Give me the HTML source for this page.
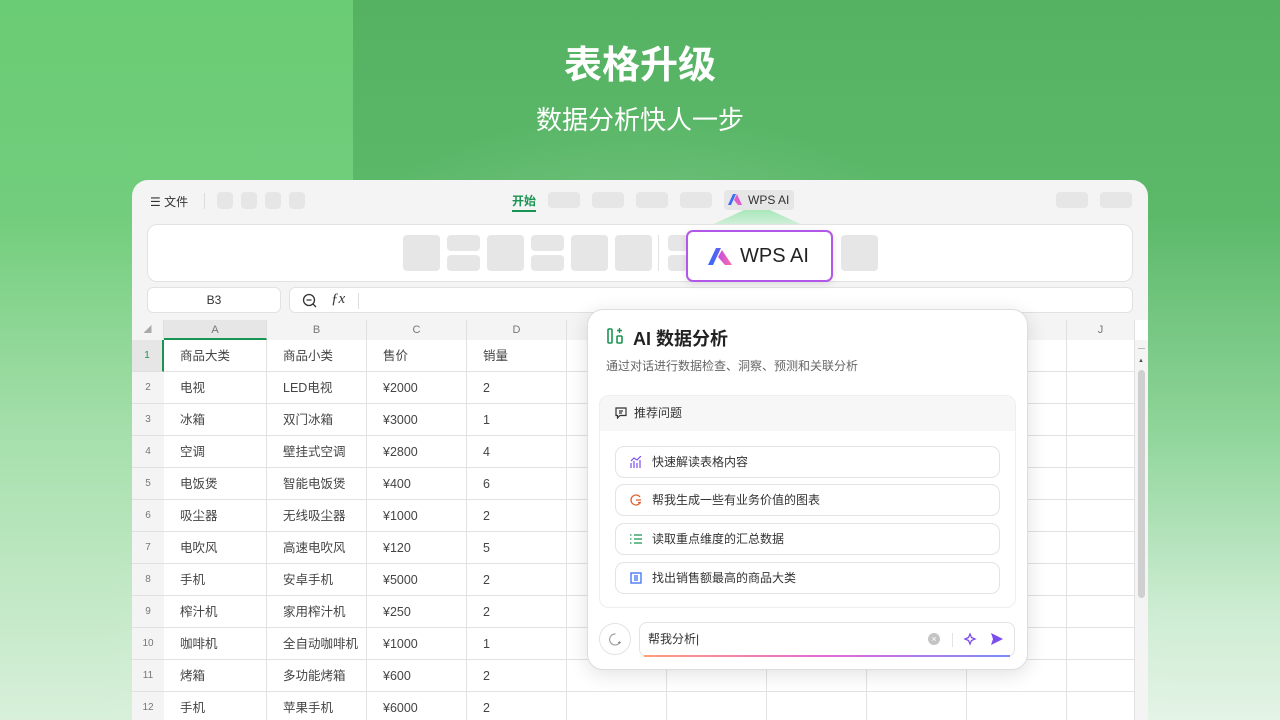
<!DOCTYPE html>
<html style="width:1280px;height:720px;overflow:hidden"><head><meta charset="utf-8"><style>
*{margin:0;padding:0;box-sizing:border-box}
body{width:1280px;height:720px;overflow:hidden;font-family:"Liberation Sans","Noto Sans CJK SC",sans-serif;position:relative;
background:linear-gradient(180deg,#55b262 0%,#5cb96a 30%,#8fd59a 60%,#cdecd2 85%,#e4f4e6 100%);}
.lp{position:absolute;left:0;top:0;width:353px;height:720px;background:linear-gradient(180deg,#6acc74 0%,#72cd7c 30%,#a5dfab 60%,#d8f0da 100%);}
.bgfade{position:absolute;left:0;top:0;width:1280px;height:720px;background:radial-gradient(ellipse at 50% 100%,rgba(230,246,232,.7),rgba(230,246,232,0) 60%);}
h1{position:absolute;top:34px;width:1280px;text-align:center;color:#fff;font-size:38px;font-weight:bold;letter-spacing:0}
h2{position:absolute;top:100px;width:1280px;text-align:center;color:#fff;font-size:26px;font-weight:normal;letter-spacing:0}
.win{position:absolute;left:132px;top:180px;width:1016px;height:540px;background:#f4f4f4;border-radius:16px 16px 0 0;overflow:hidden}
.g{position:absolute;background:#e6e6e6;border-radius:4px}
.ribbon{position:absolute;left:15px;top:44px;width:986px;height:58px;background:#fff;border:1px solid #e2e2e2;border-radius:10px}
.box{position:absolute;background:#fff;border:1px solid #e2e2e2;border-radius:6px;height:26px}
.sheet{position:absolute;left:0;top:140px;width:1016px;height:400px;background:#fff}
.colh{position:absolute;top:0;height:20px;background:#f4f4f4;font-size:11px;color:#777;text-align:center;line-height:20px;border-right:1px solid #e0e0e0}
.rowh{position:absolute;left:0;width:32px;height:32px;background:#f4f4f4;font-size:10px;color:#777;text-align:center;line-height:32px;border-bottom:1px solid #e0e0e0}
.cell{position:absolute;height:32px;font-size:12.5px;color:#444;line-height:32px;padding-left:16px;border-right:1px solid #e2e2e2;border-bottom:1px solid #e2e2e2}
.panel{position:absolute;left:587px;top:309px;width:441px;height:361px;background:#fff;border:1px solid #ddd;border-radius:16px;box-shadow:0 4px 20px rgba(0,0,0,.12)}
.q{position:absolute;left:27px;width:385px;height:32px;border:1px solid #e3e3e3;border-radius:9px;font-size:12px;color:#333;line-height:30px;padding-left:36px}
.q svg{position:absolute;left:14px;top:9px}
</style></head><body>
<div class="lp"></div><div class="bgfade"></div>
<h1>表格升级</h1>
<h2>数据分析快人一步</h2>
<div class="win">
 <div style="position:absolute;left:18px;top:13px;font-size:12px;color:#333">☰ 文件</div>
 <div style="position:absolute;left:72px;top:13px;width:1px;height:16px;background:#ddd"></div>
 <div class="g" style="left:85px;top:12px;width:16px;height:17px"></div>
 <div class="g" style="left:109px;top:12px;width:16px;height:17px"></div>
 <div class="g" style="left:133px;top:12px;width:16px;height:17px"></div>
 <div class="g" style="left:157px;top:12px;width:16px;height:17px"></div>
 <div style="position:absolute;left:380px;top:12px;font-size:12px;color:#1a9452;font-weight:bold">开始</div>
 <div style="position:absolute;left:380px;top:30px;width:24px;height:2px;background:#1a9452"></div>
 <div class="g" style="left:416px;top:12px;width:32px;height:16px"></div>
 <div class="g" style="left:460px;top:12px;width:32px;height:16px"></div>
 <div class="g" style="left:504px;top:12px;width:32px;height:16px"></div>
 <div class="g" style="left:548px;top:12px;width:32px;height:16px"></div>
 <div class="g" style="left:592px;top:10px;width:70px;height:20px"></div>
 <svg style="position:absolute;left:596px;top:14px" width="14" height="11" viewBox="0 0 14 11"><path d="M0 11 L5 0 H8 L3 11Z" fill="#3b6ef5"/><path d="M6 6 L9 0 L14 11 H10Z" fill="#e05ec9"/></svg>
 <div style="position:absolute;left:616px;top:13px;font-size:12px;color:#333">WPS AI</div>
 <div style="position:absolute;left:560px;top:30px;width:130px;height:24px;background:linear-gradient(180deg,rgba(160,230,180,.9),rgba(200,240,210,.2));clip-path:polygon(40% 0,60% 0,100% 100%,0 100%)"></div>
 <div class="g" style="left:924px;top:12px;width:32px;height:16px"></div>
 <div class="g" style="left:968px;top:12px;width:32px;height:16px"></div>
 <div class="ribbon">
  <div class="g" style="left:255px;top:10px;width:37px;height:36px"></div>
  <div class="g" style="left:299px;top:10px;width:33px;height:16px"></div>
  <div class="g" style="left:299px;top:30px;width:33px;height:16px"></div>
  <div class="g" style="left:339px;top:10px;width:37px;height:36px"></div>
  <div class="g" style="left:383px;top:10px;width:33px;height:16px"></div>
  <div class="g" style="left:383px;top:30px;width:33px;height:16px"></div>
  <div class="g" style="left:423px;top:10px;width:37px;height:36px"></div>
  <div class="g" style="left:467px;top:10px;width:37px;height:36px"></div>
  <div style="position:absolute;left:510px;top:10px;width:1px;height:36px;background:#e2e2e2"></div>
  <div class="g" style="left:520px;top:10px;width:20px;height:16px"></div>
  <div class="g" style="left:520px;top:30px;width:20px;height:16px"></div>
  <div class="g" style="left:693px;top:10px;width:37px;height:36px"></div>
 </div>
 <div class="box" style="left:15px;top:107px;width:134px;font-size:12px;color:#333;text-align:center;line-height:24px">B3</div>
 <div class="box" style="left:157px;top:107px;width:844px">
  <svg style="position:absolute;left:12px;top:5px" width="16" height="16" viewBox="0 0 16 16" fill="none" stroke="#333" stroke-width="1.3"><circle cx="7" cy="7" r="5.5"/><path d="M4.5 7H9.5M11 11L14 14"/></svg>
  <div style="position:absolute;left:41px;top:3px;font-size:15px;font-style:italic;font-family:'Liberation Serif',serif;color:#333">ƒx</div>
  <div style="position:absolute;left:68px;top:5px;width:1px;height:16px;background:#ddd"></div>
 </div>
 <div class="sheet" id="sh"></div>
</div>
<div style="position:absolute;left:686px;top:230px;width:147px;height:52px;background:#fff;border:2px solid #b158e8;border-radius:7px;box-shadow:0 2px 8px rgba(0,0,0,.1)">
 <svg style="position:absolute;left:20px;top:16px" width="24" height="17" viewBox="0 0 24 17"><defs><linearGradient id="a" x1="0" x2="1"><stop offset="0" stop-color="#2f6cf6"/><stop offset="1" stop-color="#6b5cf0"/></linearGradient><linearGradient id="b" x1="0" x2="1"><stop offset="0" stop-color="#c04ee8"/><stop offset="1" stop-color="#ff6fa0"/></linearGradient></defs><path d="M0 17 L8 0 H13 L5 17Z" fill="url(#a)"/><path d="M10 9 L14 2 L24 17 H17Z" fill="url(#b)"/></svg>
 <div style="position:absolute;left:52px;top:13px;font-size:20px;color:#222">WPS AI</div>
</div>
<div class="panel">
 <svg style="position:absolute;left:19px;top:17px" width="18" height="18" viewBox="0 0 18 18" fill="none" stroke="#1a9452" stroke-width="1.6"><rect x="1" y="2" width="4" height="14" rx="1"/><rect x="10" y="9" width="5" height="7" rx="1"/><path d="M12.5 1V6M10 3.5H15" stroke-width="1.4"/></svg>
 <div style="position:absolute;left:45px;top:15px;font-size:18px;color:#222;font-weight:bold">AI 数据分析</div>
 <div style="position:absolute;left:18px;top:47px;font-size:12px;color:#666">通过对话进行数据检查、洞察、预测和关联分析</div>
 <div style="position:absolute;left:11px;top:85px;width:417px;height:213px;border:1px solid #eee;border-radius:10px;overflow:hidden">
  <div style="height:35px;background:#f7f7f7;font-size:12px;color:#333;line-height:34px;padding-left:34px;position:relative">
   <svg style="position:absolute;left:15px;top:11px" width="12" height="12" viewBox="0 0 12 12" fill="none" stroke="#333" stroke-width="1.2"><path d="M1 1H11V8.5H5L2.5 11V8.5H1Z"/><path d="M4 4H8M4 6H7"/></svg>推荐问题</div>
 </div>
 <div class="q" style="top:136px"><svg width="12" height="12" viewBox="0 0 12 12" fill="none" stroke="#7b4df0" stroke-width="1.2"><path d="M1 12V7M4 12V5M7 12V7M10 12V4M1 5L4 2L7 4L11 0"/></svg>快速解读表格内容</div>
 <div class="q" style="top:174px"><svg width="12" height="12" viewBox="0 0 12 12" fill="none" stroke="#e0612e" stroke-width="1.3"><path d="M10 3A5 5 0 1 0 10 9"/><path d="M6 6H11M8 8.5H11"/></svg>帮我生成一些有业务价值的图表</div>
 <div class="q" style="top:213px"><svg width="12" height="12" viewBox="0 0 12 12" fill="none" stroke="#1a9452" stroke-width="1.3"><path d="M0 2H1.5M0 6H1.5M0 10H1.5M4 2H12M4 6H12M4 10H12"/></svg>读取重点维度的汇总数据</div>
 <div class="q" style="top:252px"><svg width="12" height="12" viewBox="0 0 12 12" fill="none" stroke="#3b6ef5" stroke-width="1.3"><rect x="1" y="1" width="10" height="10"/><path d="M4 4H8M4 6H8M4 8H8"/></svg>找出销售额最高的商品大类</div>
 <div style="position:absolute;left:11px;top:313px;width:32px;height:32px;border:1px solid #e3e3e3;border-radius:50%">
  <svg style="position:absolute;left:9px;top:9px" width="13" height="13" viewBox="0 0 13 13" fill="none" stroke="#999" stroke-width="1.1"><path d="M6.5 1A5.5 5.5 0 1 0 11 9M9 9.5H12M10.5 8V11"/></svg></div>
 <div style="position:absolute;left:51px;top:312px;width:376px;height:35px;border:1px solid #e3e3e3;border-radius:8px;font-size:12px;color:#333;line-height:32px;padding-left:8px">帮我分析|
  <div style="position:absolute;left:4px;right:4px;bottom:-1px;height:2px;background:linear-gradient(90deg,#ff9e7a,#e46ad6,#7a8cf7)"></div>
  <div style="position:absolute;left:288px;top:10px;width:12px;height:12px;border-radius:50%;background:#c4c4c4;color:#fff;font-size:9px;line-height:12px;text-align:center">×</div>
  <div style="position:absolute;left:312px;top:10px;width:1px;height:14px;background:#e3e3e3"></div>
  <svg style="position:absolute;left:323px;top:9px" width="14" height="14" viewBox="0 0 14 14" fill="none" stroke="#7b4df0" stroke-width="1.3"><path d="M7 2L8.5 5.5L12 7L8.5 8.5L7 12L5.5 8.5L2 7L5.5 5.5Z"/></svg>
  <svg style="position:absolute;left:350px;top:9px" width="14" height="14" viewBox="0 0 14 14"><path d="M1 1L13 7L1 13L3 7Z" fill="#7b4df0"/></svg>
 </div>
</div>
<script>
var sh=document.getElementById('sh'),h='';
var cx=[32,135,235,335,435,535,635,735,835,935,1003];
var L='ABCDEFGHIJ';
h+='<div class="colh" style="left:0;width:32px;font-size:8px;color:#aaa">◢</div>';
for(var i=0;i<10;i++){var w=cx[i+1]-cx[i];h+='<div class="colh" style="left:'+cx[i]+'px;width:'+w+'px;'+(i==0?'background:#e6e6e6;border-bottom:2px solid #1a9452;':'')+'">'+(i<4||i==9?L[i]:'')+'</div>';}
var d=[['商品大类','商品小类','售价','销量'],['电视','LED电视','¥2000','2'],['冰箱','双门冰箱','¥3000','1'],['空调','壁挂式空调','¥2800','4'],['电饭煲','智能电饭煲','¥400','6'],['吸尘器','无线吸尘器','¥1000','2'],['电吹风','高速电吹风','¥120','5'],['手机','安卓手机','¥5000','2'],['榨汁机','家用榨汁机','¥250','2'],['咖啡机','全自动咖啡机','¥1000','1'],['烤箱','多功能烤箱','¥600','2'],['手机','苹果手机','¥6000','2']];
for(var r=0;r<12;r++){var t=20+r*32;
h+='<div class="rowh" style="top:'+t+'px;'+(r==0?'background:#e6e6e6;color:#1a9452;border-right:2px solid #1a9452':'')+'">'+(r+1)+'</div>';
for(var c=0;c<10;c++){var w=cx[c+1]-cx[c];h+='<div class="cell" style="left:'+cx[c]+'px;top:'+t+'px;width:'+w+'px">'+(c<4?d[r][c]:'')+'</div>';}}
h+='<div style="position:absolute;left:1003px;top:20px;width:13px;height:400px;background:#f4f4f4"><div style="position:absolute;left:3px;top:8px;width:7px;height:1px;background:#bbb"></div><div style="position:absolute;left:3px;top:18px;font-size:6px;color:#555">▲</div><div style="position:absolute;left:3px;top:30px;width:7px;height:228px;background:#cfcfcf;border-radius:4px"></div></div>';
sh.innerHTML=h;
</script>
</body></html>
